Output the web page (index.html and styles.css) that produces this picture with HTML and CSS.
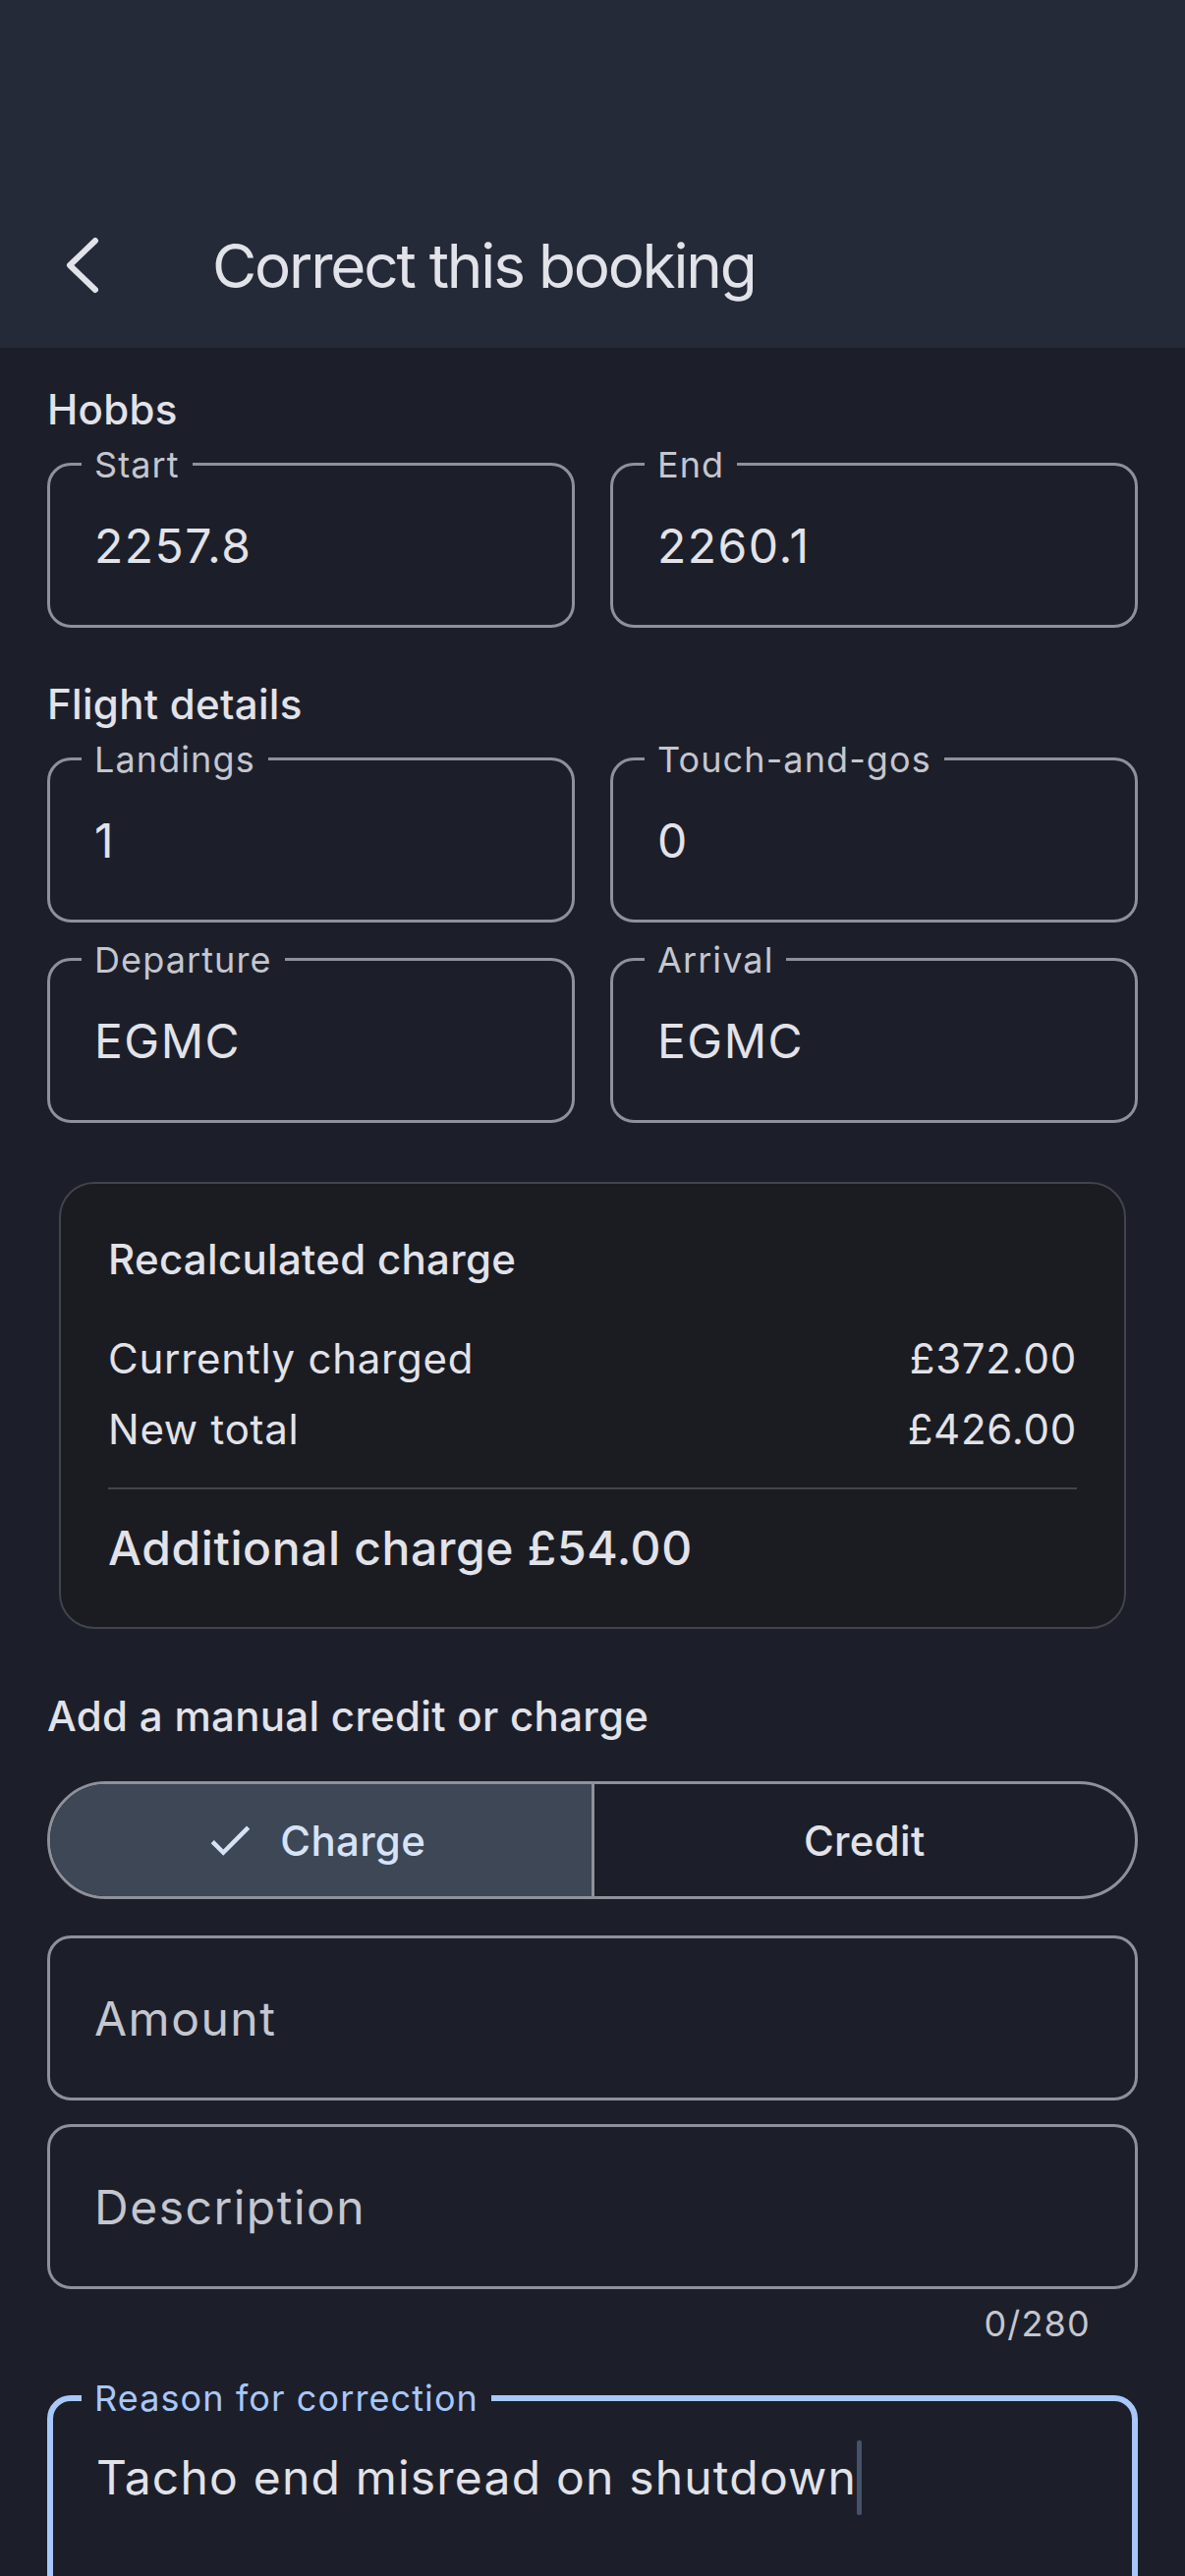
FILE: index.html
```html
<!DOCTYPE html>
<html lang="en">
<head>
<meta charset="utf-8">
<title>Correct this booking</title>
<link rel="stylesheet" href="styles.css">
</head>
<body>
<div class="screen">
  <header class="appbar">
    <div class="toolbar">
      <div class="leading">
        <svg class="back" width="40" height="64" viewBox="0 0 40 64"><polyline points="33,7 7,32 33,57" fill="none" stroke="#e2e2e9" stroke-width="6" stroke-linecap="round" stroke-linejoin="round"/></svg>
      </div>
      <h1 class="title">Correct this booking</h1>
    </div>
  </header>

  <main class="content">
    <h2 class="section-title first">Hobbs</h2>
    <div class="grid">
      <div class="field"><span class="flabel">Start</span><span class="fvalue">2257.8</span></div>
      <div class="field"><span class="flabel">End</span><span class="fvalue">2260.1</span></div>
    </div>

    <h2 class="section-title">Flight details</h2>
    <div class="grid">
      <div class="field"><span class="flabel">Landings</span><span class="fvalue">1</span></div>
      <div class="field"><span class="flabel">Touch-and-gos</span><span class="fvalue">0</span></div>
      <div class="field"><span class="flabel">Departure</span><span class="fvalue">EGMC</span></div>
      <div class="field"><span class="flabel">Arrival</span><span class="fvalue">EGMC</span></div>
    </div>

    <section class="card">
      <div class="card-title">Recalculated charge</div>
      <div class="row"><span>Currently charged</span><span>£372.00</span></div>
      <div class="row"><span>New total</span><span>£426.00</span></div>
      <div class="divider"></div>
      <div class="total">Additional charge £54.00</div>
    </section>

    <h2 class="section-title manual">Add a manual credit or charge</h2>
    <div class="segmented">
      <div class="segment selected">
        <svg class="check" width="54" height="54" viewBox="0 0 24 24"><path d="M9 16.17L4.83 12l-1.42 1.41L9 19 21 7l-1.41-1.41z" fill="#d6e3f7"/></svg>
        <span>Charge</span>
      </div>
      <div class="segment"><span>Credit</span></div>
    </div>

    <div class="field wide amount"><span class="fvalue placeholder">Amount</span></div>
    <div class="field wide desc"><span class="fvalue placeholder">Description</span></div>
    <div class="counter">0/280</div>

    <div class="field wide focused">
      <span class="flabel">Reason for correction</span>
      <div class="ftext">Tacho end misread on shutdown<span class="caret"></span></div>
    </div>
  </main>
</div>
</body>
</html>
```

FILE: styles.css
```css
* { box-sizing: border-box; }

html, body {
  margin: 0;
  padding: 0;
  background: #1c1f29;
}

body {
  font-family: Inter, "Noto Sans", sans-serif;
  color: #e2e2e9;
}

.screen {
  width: 1206px;
  height: 2622px;
  overflow: hidden;
  background: #1c1f29;
}

/* App bar */
.appbar {
  height: 354px;
  padding-top: 186px;
  background: #252a38;
}

.toolbar {
  height: 168px;
  display: flex;
  align-items: center;
}

.leading {
  width: 168px;
  height: 168px;
  display: flex;
  align-items: center;
  justify-content: center;
}

.back { display: block; }

.title {
  margin: 0 0 0 48px;
  font-size: 62px;
  font-weight: 400;
  line-height: normal;
  letter-spacing: -2.2px;
  color: #e2e2e9;
}

/* Content */
.content {
  padding: 33px 48px 0;
}

.section-title {
  margin: 48px 0 24px;
  font-size: 42px;
  font-weight: 500;
  line-height: 60px;
  letter-spacing: 0.3px;
  color: #e2e2e9;
}

.section-title.first { margin-top: 0; }
.section-title.manual { margin-top: 59px; margin-bottom: 36px; }

.grid {
  display: grid;
  grid-template-columns: 1fr 1fr;
  column-gap: 36px;
  row-gap: 36px;
}

.field {
  position: relative;
  height: 168px;
  border: 3px solid #8e9199;
  border-radius: 24px;
  display: flex;
  align-items: center;
  padding-left: 45px;
}

.flabel {
  position: absolute;
  left: 32px;
  top: -1.5px;
  transform: translateY(-50%);
  padding: 0 13px;
  background: #1c1f29;
  font-size: 36px;
  line-height: normal;
  letter-spacing: 1.1px;
  color: #c4c6d0;
}

.fvalue {
  font-size: 48px;
  line-height: normal;
  letter-spacing: 1.5px;
  color: #e2e2e9;
}

.fvalue.placeholder { color: #c4c6d0; }

/* Card */
.card {
  margin: 60px 12px 0;
  padding: 47px 48px 48px;
  border: 2px solid #41444c;
  border-radius: 36px;
  background: #1a1c22;
}

.card-title {
  font-size: 42px;
  font-weight: 500;
  line-height: 60px;
  letter-spacing: 0.3px;
  margin-bottom: 35px;
}

.row {
  display: flex;
  justify-content: space-between;
  padding: 6px 0;
  font-size: 42px;
  line-height: 60px;
  letter-spacing: 0.75px;
}

.divider {
  height: 2px;
  margin-top: 23px;
  background: #41444c;
}

.total {
  margin-top: 28px;
  font-size: 48px;
  font-weight: 500;
  line-height: 64px;
  letter-spacing: 0.6px;
}

/* Segmented button */
.segmented {
  display: flex;
  height: 120px;
  border: 3px solid #8e9199;
  border-radius: 60px;
  overflow: hidden;
}

.segment {
  flex: 1;
  display: flex;
  align-items: center;
  justify-content: center;
  gap: 24px;
  font-size: 42px;
  font-weight: 500;
  letter-spacing: 0.3px;
  color: #e2e2e9;
}

.segment.selected {
  background: #3d4756;
  border-right: 3px solid #8e9199;
  color: #d6e3f7;
}

.check {
  display: block;
  margin-left: -12px;
}

/* Wide fields */
.field.wide { width: 100%; }
.field.amount { margin-top: 37px; }
.field.desc { margin-top: 24px; }

.counter {
  margin-top: 11px;
  padding-right: 48px;
  text-align: right;
  font-size: 36px;
  line-height: 48px;
  letter-spacing: 1.2px;
  color: #c4c6d0;
}

.field.focused {
  margin-top: 49px;
  height: 420px;
  border: 6px solid #a8c7fa;
  align-items: flex-start;
  padding-top: 48px;
  padding-left: 44px;
}

.field.focused .flabel {
  color: #a8c7fa;
  left: 29px;
  top: -3px;
}

.ftext {
  font-size: 48px;
  line-height: normal;
  letter-spacing: 1.2px;
  color: #e2e2e9;
}

.caret {
  position: relative;
  display: inline-block;
  width: 5px;
  height: 0;
}

.caret::after {
  content: "";
  position: absolute;
  left: 0;
  top: -55px;
  width: 5px;
  height: 76px;
  border-radius: 2px;
  background: #45526a;
}
```
